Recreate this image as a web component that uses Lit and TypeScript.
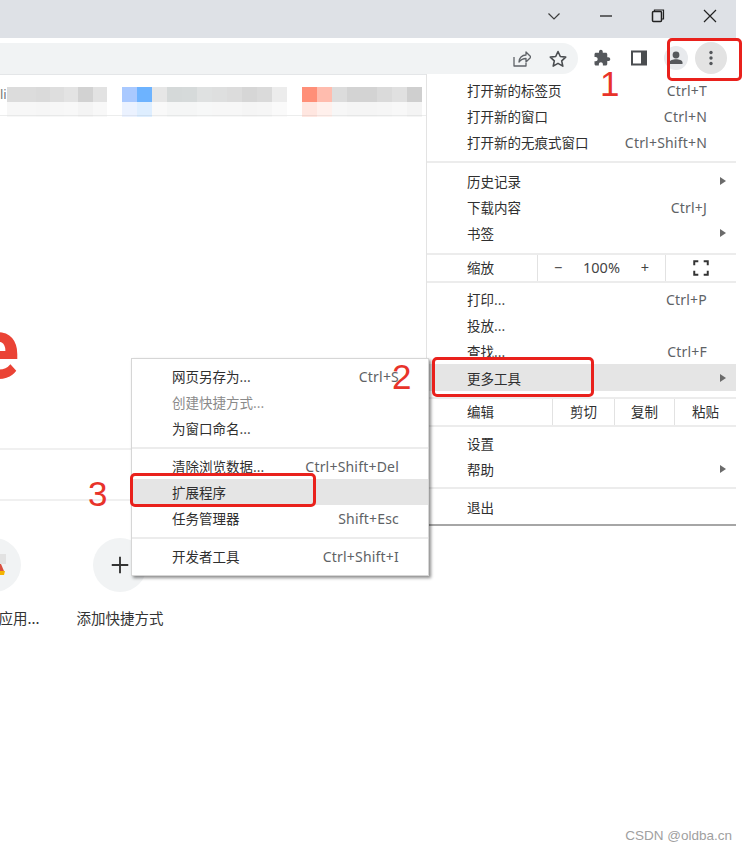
import { LitElement, html, css, svg } from "lit";
import { customElement } from "lit/decorators.js";

type Row = { t: string; k?: string; arrow?: boolean; hot?: boolean; dim?: boolean };

const mainA: Row[] = [
  { t: "打开新的标签页", k: "Ctrl+T" },
  { t: "打开新的窗口", k: "Ctrl+N" },
  { t: "打开新的无痕式窗口", k: "Ctrl+Shift+N" },
];
const mainB: Row[] = [
  { t: "历史记录", arrow: true },
  { t: "下载内容", k: "Ctrl+J" },
  { t: "书签", arrow: true },
];
const mainC: Row[] = [
  { t: "打印...", k: "Ctrl+P" },
  { t: "投放..." },
  { t: "查找...", k: "Ctrl+F" },
  { t: "更多工具", arrow: true, hot: true },
];
const mainD: Row[] = [
  { t: "设置" },
  { t: "帮助", arrow: true },
];
const subA: Row[] = [
  { t: "网页另存为...", k: "Ctrl+S" },
  { t: "创建快捷方式...", dim: true },
  { t: "为窗口命名..." },
];
const subB: Row[] = [
  { t: "清除浏览数据...", k: "Ctrl+Shift+Del" },
  { t: "扩展程序", hot: true },
  { t: "任务管理器", k: "Shift+Esc" },
];

const blur1 = ["#dcdcdc", "#dcdcdc", "#dadada", "#dedede", "#e3e3e3", "#d2d2d2", "#e2e2e2"];
const blur2 = ["#a9c9ff", "#6db3ff", "#e6e6e6", "#d5d9d9", "#d6dada", "#dfe1e1", "#dedfdf", "#dcdcdc", "#d6d6d6", "#dadada", "#ececec"];
const blur3 = ["#ff8f78", "#ffbcae", "#dcdcdc", "#d3d3d3", "#d3d3d3", "#dadada", "#e0e0e0", "#cfcfcf"];

@customElement("app-root")
export class AppRoot extends LitElement {
  static styles = css`
    :host {
      display: block;
      width: 746px;
      height: 851px;
      position: relative;
      overflow: hidden;
      background: #fff;
      font-family: "Noto Sans CJK SC", "Noto Sans", sans-serif;
      color: #2b2b2b;
    }
    .window { width: 736px; display: flex; flex-direction: column; }
    .titlebar {
      height: 38px;
      box-sizing: border-box;
      padding-bottom: 6px;
      background: #dee1e6;
      display: flex;
      justify-content: flex-end;
      align-items: center;
    }
    .winbtn { width: 52px; height: 32px; display: flex; align-items: center; justify-content: center; }
    .toolbar { height: 36px; display: flex; align-items: stretch; background: #fff; border-bottom: 1px solid #e4e6e8; }
    .omnibox {
      width: 578px;
      margin-top: 5px;
      background: #f1f3f4;
      border-radius: 0 16px 16px 0;
      display: flex;
      justify-content: flex-end;
      align-items: center;
      gap: 13px;
      padding-right: 8px;
      box-sizing: border-box;
    }
    .tool { width: 24px; height: 24px; display: flex; align-items: center; justify-content: center; }
    .tools { display: flex; align-items: center; flex: 1; padding: 4px 0 0 12px; gap: 13px; }
    .avatar { background: #e8eaed; border-radius: 50%; }
    .dots { width: 32px; height: 32px; background: #e3e3e3; border-radius: 50%; display: flex; align-items: center; justify-content: center; margin-left: -6px; }
    .bookmarks {
      height: 41px;
      border-bottom: 1px solid #eceded;
      display: flex;
      padding-top: 12px;
      box-sizing: border-box;
      font: 13px "Noto Sans", sans-serif;
      color: #777;
    }
    .li { width: 7px; height: 15px; line-height: 15px; overflow: hidden; }
    .blurgroup { margin-right: 15px; }
    .blurline { display: flex; height: 15px; }
    .blurline.soft { opacity: 0.22; }
    .cell { width: 15px; height: 15px; }
    .narrow .cell { width: 14.3px; }
    .main { height: 620px; overflow: hidden; }
    .logo {
      font: 700 86px/86px Roboto, "Noto Sans", sans-serif;
      color: #ea4335;
      margin: 190px 0 0 -27px;
      height: 86px;
    }
    .content { display: flex; flex-direction: column; }
    .search {
      width: 200px;
      height: 53px;
      margin: 56px 0 0 -20px;
      box-sizing: border-box;
      border: 2px solid #f0f0f0;
      border-width: 2px 0 2px 0;
    }
    .tiles { display: flex; margin: 37px 0 0 -69px; }
    .tile { width: 126px; flex: none; display: flex; flex-direction: column; align-items: center; }
    .circle {
      width: 54px; height: 54px; border-radius: 50%;
      background: #f1f3f4;
      display: flex; align-items: center; justify-content: center;
    }
    .tile-label { margin-top: 17px; font-size: 14.5px; line-height: 18px; color: #333; white-space: nowrap; }
    .shift { margin-left: 50px; }

    .menu {
      position: absolute;
      background: #fff;
      box-sizing: border-box;
      font-size: 13.5px;
      color: #2f2f2f;
      display: flex;
      flex-direction: column;
    }
    .menu-main {
      left: 426px; top: 74px; width: 310px; height: 452px;
      padding-top: 3px;
      border-left: 1px solid #e3e3e3;
      border-bottom: 2px solid #a6a6a6;
    }
    .menu-sub {
      left: 131px; top: 358px; width: 298px; height: 218px;
      padding-top: 4px;
      border: 1px solid #d6d6d6;
      box-shadow: 2px 2px 3px rgba(0, 0, 0, 0.45);
    }
    .row {
      height: 26.2px;
      display: flex;
      align-items: center;
      flex: none;
      padding-left: 40px;
      padding-right: 29px;
      white-space: nowrap;
      position: relative;
    }
    .row.hot { background: #e5e5e5; }
    .row.dim { color: #8a8a8a; }
    .label { flex: 1; }
    .key { color: #5e6266; font: 14px "Noto Sans", sans-serif; letter-spacing: 0.2px; }
    .arrow {
      position: absolute; right: 10px;
      width: 0; height: 0;
      border-left: 6px solid #6b6b6b;
      border-top: 4px solid transparent;
      border-bottom: 4px solid transparent;
    }
    .sep { height: 2px; background: #ececec; flex: none; }
    .s1 { margin-top: 5px; margin-bottom: 5.4px; }
    .s2 { margin-top: 6px; }
    .s3 { margin-bottom: 3.4px; }
    .s4 { margin-top: 6.5px; }
    .s5 { margin-bottom: 3px; }
    .s6 { margin-top: 4px; margin-bottom: 5px; }
    .s7 { margin-top: 5px; margin-bottom: 4.4px; }
    .strip { height: 26px; display: flex; align-items: stretch; flex: none; padding-left: 40px; }
    .strip .name { flex: none; display: flex; align-items: center; }
    .zoomstrip .name { width: 70px; padding-bottom: 2px; box-sizing: border-box; }
    .editstrip .name { width: 85px; padding-bottom: 3px; box-sizing: border-box; }
    .cellbtn { border-left: 1px solid #e2e2e2; display: flex; align-items: center; justify-content: center; flex: none; box-sizing: border-box; }
    .editstrip .cellbtn { padding-bottom: 3px; }
    .zoomctl { width: 128px; justify-content: space-between; padding: 0 16px 2px; font: 14.5px "Noto Sans", sans-serif; color: #444; }
    .fs { width: 71px; }
    .edit1 { width: 62px; }
    .edit2 { width: 60px; }
    .edit3 { width: 62px; }

    .note {
      position: absolute;
      border: 3px solid #e9211c;
      border-radius: 5px;
      box-sizing: border-box;
    }
    .n1 { left: 667px; top: 38px; width: 75px; height: 43px; }
    .n2 { left: 432px; top: 357px; width: 162px; height: 40px; }
    .n3 { left: 130px; top: 473px; width: 186px; height: 34px; }
    .num {
      position: absolute;
      font: 35px/35px "Liberation Sans", sans-serif;
      color: #e8332a;
    }
    .d1 { left: 600px; top: 66px; }
    .d2 { left: 392px; top: 359px; }
    .d3 { left: 88px; top: 476px; }
    .wm {
      position: absolute;
      right: 14px;
      top: 827px;
      font: 13.5px/18px "Liberation Sans", sans-serif;
      color: #a0a0a0;
    }
  `;

  row(r: Row) {
    const cls = "row" + (r.hot ? " hot" : "") + (r.dim ? " dim" : "");
    return html`<div class=${cls}>
      <span class="label">${r.t}</span>
      ${r.k ? html`<span class="key">${r.k}</span>` : ""}
      ${r.arrow ? html`<span class="arrow"></span>` : ""}
    </div>`;
  }

  blur(cells: string[], narrow = false) {
    const line = html`${cells.map((c) => html`<div class="cell" style="background:${c}"></div>`)}`;
    return html`<div class="blurgroup ${narrow ? "narrow" : ""}">
      <div class="blurline">${line}</div>
      <div class="blurline soft">${line}</div>
    </div>`;
  }

  icon(body: unknown, w = 20, h = 20, box = "0 0 20 20") {
    return html`<svg width=${w} height=${h} viewBox=${box} fill="none">${body}</svg>`;
  }

  render() {
    return html`
      <div class="window">
        <div class="titlebar">
          <div class="winbtn">${this.icon(svg`<path d="M4.500 7.500 10 13l5.500-5.500" stroke="#3c3c3c" stroke-width="1.200"/>`)}</div>
          <div class="winbtn">${this.icon(svg`<path d="M4 10h12" stroke="#222" stroke-width="1.300"/>`)}</div>
          <div class="winbtn">${this.icon(svg`<path d="M6.500 5V4h9v9h-2" stroke="#222" stroke-width="1.200"/><rect x="4.500" y="5.500" width="9" height="10" rx="1" stroke="#222" stroke-width="1.500"/>`)}</div>
          <div class="winbtn">${this.icon(svg`<path d="M4 4l12 12M16 4 4 16" stroke="#222" stroke-width="1.200"/>`)}</div>
        </div>
        <div class="toolbar">
          <div class="omnibox">
            <div class="tool">${this.icon(svg`<path d="M3 8v9h12v-3M8 13c0-4 3-7 7-7V3l5 5-5 5V9.500c-3 0-5 1-7 3.500z" stroke="#5f6368" stroke-width="1.300" stroke-linejoin="round"/>`)}</div>
            <div class="tool">${this.icon(svg`<path d="M10 2.500l2.300 5 5.400.6-4 3.700 1.100 5.300-4.800-2.700-4.800 2.700 1.100-5.300-4-3.700 5.400-.6z" stroke="#4a4d50" stroke-width="1.600" stroke-linejoin="round"/>`)}</div>
          </div>
          <div class="tools">
            <div class="tool">${this.icon(svg`<path d="M20.500 11H19V7c0-1.100-.9-2-2-2h-4V3.500C13 2.120 11.880 1 10.500 1S8 2.120 8 3.500V5H4c-1.100 0-1.990.9-1.990 2v3.800H3.500c1.490 0 2.700 1.210 2.700 2.700s-1.210 2.700-2.700 2.700H2V20c0 1.100.9 2 2 2h3.800v-1.500c0-1.490 1.210-2.700 2.700-2.700 1.490 0 2.700 1.210 2.700 2.700V22H17c1.100 0 2-.9 2-2v-4h1.500c1.380 0 2.500-1.120 2.500-2.500S21.880 11 20.500 11z" fill="#55585c"/>`, 18, 18, "0 0 24 24")}</div>
            <div class="tool">${this.icon(svg`<path d="M3 3.500h14v13H3z" stroke="#4a4d50" stroke-width="2"/><path d="M12 3.500h5v13h-5z" fill="#4a4d50"/>`)}</div>
            <div class="tool avatar">${this.icon(svg`<circle cx="10" cy="7" r="3.400" fill="#55585c"/><path d="M3.500 16v-1.500c0-2 3.500-3.200 6.500-3.200s6.500 1.200 6.500 3.200V16z" fill="#55585c"/>`)}</div>
            <div class="dots">${this.icon(svg`<circle cx="10" cy="4.500" r="1.700" fill="#54575b"/><circle cx="10" cy="10" r="1.700" fill="#54575b"/><circle cx="10" cy="15.500" r="1.700" fill="#54575b"/>`)}</div>
          </div>
        </div>
        <div class="bookmarks">
          <div class="li">li</div>
          ${this.blur(blur1, true)}
          ${this.blur(blur2)}
          ${this.blur(blur3)}
        </div>
        <div class="main">
          <div class="content">
            <div class="logo">e</div>
            <div class="search"></div>
            <div class="tiles">
              <div class="tile">
                <div class="circle">${this.icon(svg`<rect x="33" y="16" width="6" height="10" fill="#e2e2e2"/><path d="M33 26h1l3 7h-4z" fill="#d9503f"/><path d="M33 33h5l-1 4h-4z" fill="#f4b400"/>`, 54, 54, "0 0 54 54")}</div>
                <div class="tile-label shift">应用...</div>
              </div>
              <div class="tile">
                <div class="circle">${this.icon(svg`<path d="M10 2.500v15M2.500 10h15" stroke="#333" stroke-width="1.700"/>`, 22, 22)}</div>
                <div class="tile-label">添加快捷方式</div>
              </div>
            </div>
          </div>
        </div>
      </div>

      <div class="menu menu-main">
        ${mainA.map((r) => this.row(r))}
        <div class="sep s1"></div>
        ${mainB.map((r) => this.row(r))}
        <div class="sep s2"></div>
        <div class="strip zoomstrip">
          <div class="name">缩放</div>
          <div class="cellbtn zoomctl"><span>−</span><span>100%</span><span>+</span></div>
          <div class="cellbtn fs">${this.icon(svg`<path d="M2.500 7V2.500H7M13 2.500h4.500V7M17.500 13v4.500H13M7 17.500H2.500V13" stroke="#333" stroke-width="2.200"/>`, 18, 18)}</div>
        </div>
        <div class="sep s3"></div>
        ${mainC.map((r) => this.row(r))}
        <div class="sep s4"></div>
        <div class="strip editstrip">
          <div class="name">编辑</div>
          <div class="cellbtn edit1">剪切</div>
          <div class="cellbtn edit2">复制</div>
          <div class="cellbtn edit3">粘贴</div>
        </div>
        <div class="sep s5"></div>
        ${mainD.map((r) => this.row(r))}
        <div class="sep s6"></div>
        ${this.row({ t: "退出" })}
      </div>

      <div class="menu menu-sub">
        ${subA.map((r) => this.row(r))}
        <div class="sep s7"></div>
        ${subB.map((r) => this.row(r))}
        <div class="sep s7"></div>
        ${this.row({ t: "开发者工具", k: "Ctrl+Shift+I" })}
      </div>

      <div class="note n1"></div>
      <div class="note n2"></div>
      <div class="note n3"></div>
      <div class="num d1">1</div>
      <div class="num d2">2</div>
      <div class="num d3">3</div>
      <div class="wm">CSDN @oldba.cn</div>
    `;
  }
}
